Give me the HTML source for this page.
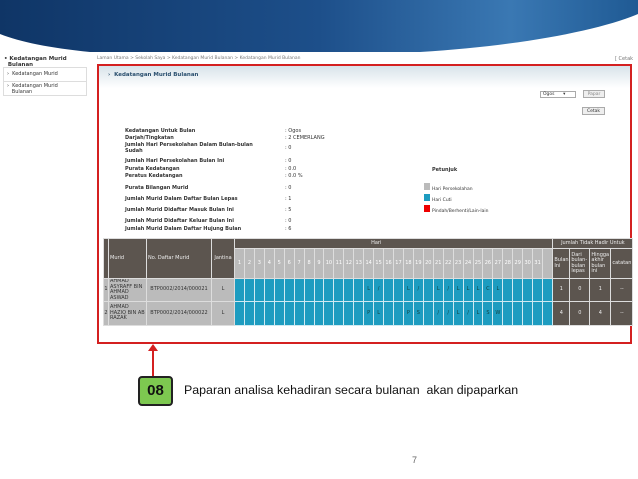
<!DOCTYPE html>
<html><head><meta charset="utf-8"><style>
*{margin:0;padding:0;box-sizing:border-box}
body{width:638px;height:479px;background:#fff;position:relative;overflow:hidden;font-family:"DejaVu Sans","Liberation Sans",sans-serif}
.a{position:absolute;white-space:nowrap}
.s{font-size:5px;color:#333}
.b{font-size:5px;font-weight:bold;color:#333}
table{border-collapse:collapse;position:absolute;left:103px;top:238px;width:529px;table-layout:fixed;font-size:5px}
td{border:1px solid #ddd;text-align:center;padding:0;overflow:hidden;line-height:5.5px}
.h{background:#5c554f;color:#eee}
.g{background:#bbb;color:#fff}
.c{background:#1d9cc0;color:#144;border-color:#cfeaf2}
.d{background:#bbb;color:#333}
.l{text-align:left;padding-left:1px}
</style></head><body>
<svg class="a" style="left:0;top:0" width="638" height="60">
<defs><linearGradient id="bg" x1="0" x2="1" y1="0" y2="0"><stop offset="0" stop-color="#0f3566"/><stop offset="0.5" stop-color="#1d4f8a"/><stop offset="0.8" stop-color="#3a78b3"/><stop offset="1" stop-color="#1f5a94"/></linearGradient></defs>
<path d="M0 0H638V14C600 30 520 46 420 52H90C50 48 20 42 0 34Z" fill="url(#bg)"/>
</svg>
<div class="a b" style="left:4px;top:56px;font-size:5.5px;line-height:6px">• Kedatangan Murid<br>&nbsp;&nbsp;Bulanan</div>
<div class="a" style="left:3px;top:67px;width:84px;height:29px;border:1px solid #ddd"></div>
<div class="a s" style="left:3px;top:81px;width:84px;border-top:1px solid #ddd"></div>
<div class="a s" style="left:7px;top:71px">› &nbsp;Kedatangan Murid</div>
<div class="a s" style="left:7px;top:83px;line-height:6px">› &nbsp;Kedatangan Murid<br>&nbsp;&nbsp;&nbsp;Bulanan</div>
<div class="a s" style="left:97px;top:56px;color:#777;font-size:4.5px">Laman Utama &gt; Sekolah Saya &gt; Kedatangan Murid Bulanan &gt; Kedatangan Murid Bulanan</div>
<div class="a s" style="left:615px;top:56px;color:#777">[ Cetak</div>
<div class="a" style="left:97px;top:64px;width:535px;height:280px;border:2px solid #d42020;background:linear-gradient(#d8e3ea,#fff 22px)"></div>
<div class="a b" style="left:108px;top:72px;color:#2a4f6e;font-size:5.5px">› &nbsp;Kedatangan Murid Bulanan</div>
<div class="a s" style="left:540px;top:91px;width:36px;height:7px;border:1px solid #aaa;font-size:4.5px;padding-left:2px">Ogos &nbsp;&nbsp;&nbsp;&nbsp;&nbsp;▾</div>
<div class="a s" style="left:583px;top:90px;width:22px;height:8px;border:1px solid #aaa;background:#eee;font-size:4.5px;text-align:center;line-height:7px;color:#888">Papar</div>
<div class="a s" style="left:582px;top:107px;width:23px;height:8px;border:1px solid #aaa;background:#eee;font-size:4.5px;text-align:center;line-height:7px">Cetak</div>
<div class="a b" style="left:125px;top:128px;line-height:7px">Kedatangan Untuk Bulan<br>Darjah/Tingkatan</div>
<div class="a b" style="left:125px;top:142px;line-height:6px">Jumlah Hari Persekolahan Dalam Bulan-bulan<br>Sudah</div>
<div class="a b" style="left:125px;top:158px;line-height:7.5px">Jumlah Hari Persekolahan Bulan Ini<br>Purata Kedatangan<br>Peratus Kedatangan</div>
<div class="a b" style="left:125px;top:185px">Purata Bilangan Murid</div>
<div class="a b" style="left:125px;top:196px">Jumlah Murid Dalam Daftar Bulan Lepas</div>
<div class="a b" style="left:125px;top:207px">Jumlah Murid Didaftar Masuk Bulan Ini</div>
<div class="a b" style="left:125px;top:217px;line-height:8px">Jumlah Murid Didaftar Keluar Bulan Ini<br>Jumlah Murid Dalam Daftar Hujung Bulan</div>
<div class="a s" style="left:285px;top:128px;line-height:7px">: Ogos<br>: 2 CEMERLANG</div>
<div class="a s" style="left:285px;top:145px">: 0</div>
<div class="a s" style="left:285px;top:158px;line-height:7.5px">: 0<br>: 0.0<br>: 0.0 %</div>
<div class="a s" style="left:285px;top:185px">: 0</div>
<div class="a s" style="left:285px;top:196px">: 1</div>
<div class="a s" style="left:285px;top:207px">: 5</div>
<div class="a s" style="left:285px;top:217px;line-height:8px">: 0<br>: 6</div>
<div class="a b" style="left:432px;top:167px">Petunjuk</div>
<div class="a" style="left:424px;top:183px;width:6px;height:7px;background:#bbb"></div>
<div class="a" style="left:424px;top:194px;width:6px;height:7px;background:#1d9cc0"></div>
<div class="a" style="left:424px;top:205px;width:6px;height:7px;background:#e00"></div>
<div class="a s" style="left:432px;top:184px;line-height:11px;font-size:4.5px">Hari Persekolahan<br>Hari Cuti<br>Pindah/Berhenti/Lain-lain</div>
<table>
<colgroup><col style="width:5px"><col style="width:38px"><col style="width:65px"><col style="width:23px"><col span="32" style="width:9.94px"><col style="width:17px"><col style="width:20px"><col style="width:21px"><col style="width:22px"></colgroup>
<tr style="height:10px"><td class="h" rowspan="2"></td><td class="h l" rowspan="2">Murid</td><td class="h l" rowspan="2">No. Daftar Murid</td><td class="h" rowspan="2">Jantina</td><td class="h l" colspan="32">&nbsp;&nbsp;&nbsp;&nbsp;&nbsp;&nbsp;&nbsp;&nbsp;&nbsp;&nbsp;&nbsp;&nbsp;&nbsp;&nbsp;&nbsp;&nbsp;&nbsp;&nbsp;&nbsp;&nbsp;&nbsp;&nbsp;&nbsp;&nbsp;&nbsp;&nbsp;&nbsp;&nbsp;&nbsp;&nbsp;&nbsp;&nbsp;&nbsp;&nbsp;&nbsp;&nbsp;&nbsp;&nbsp;&nbsp;&nbsp;&nbsp;&nbsp;&nbsp;&nbsp;&nbsp;&nbsp;&nbsp;&nbsp;&nbsp;&nbsp;&nbsp;&nbsp;&nbsp;&nbsp;&nbsp;&nbsp;&nbsp;&nbsp;&nbsp;&nbsp;&nbsp;&nbsp;&nbsp;&nbsp;&nbsp;&nbsp;&nbsp;&nbsp;&nbsp;&nbsp;&nbsp;&nbsp;&nbsp;&nbsp;&nbsp;&nbsp;&nbsp;&nbsp;&nbsp;&nbsp;&nbsp;&nbsp;&nbsp;&nbsp;&nbsp;Hari</td><td class="h" colspan="4">Jumlah Tidak Hadir Untuk</td></tr>
<tr style="height:30px"><td class="g">1</td><td class="g">2</td><td class="g">3</td><td class="g">4</td><td class="g">5</td><td class="g">6</td><td class="g">7</td><td class="g">8</td><td class="g">9</td><td class="g">10</td><td class="g">11</td><td class="g">12</td><td class="g">13</td><td class="g">14</td><td class="g">15</td><td class="g">16</td><td class="g">17</td><td class="g">18</td><td class="g">19</td><td class="g">20</td><td class="g">21</td><td class="g">22</td><td class="g">23</td><td class="g">24</td><td class="g">25</td><td class="g">26</td><td class="g">27</td><td class="g">28</td><td class="g">29</td><td class="g">30</td><td class="g">31</td><td class="g"></td><td class="h l">Bulan Ini</td><td class="h l">Dari bulan-bulan lepas</td><td class="h l">Hingga akhir bulan ini</td><td class="h">catatan</td></tr>
<tr style="height:23px"><td class="d">1</td><td class="d l">AHMAD ASYRAFF BIN AHMAD ASWAD</td><td class="d">BTP0002/2014/000021</td><td class="d">L</td><td class="c"></td><td class="c"></td><td class="c"></td><td class="c"></td><td class="c"></td><td class="c"></td><td class="c"></td><td class="c"></td><td class="c"></td><td class="c"></td><td class="c"></td><td class="c"></td><td class="c"></td><td class="c">L</td><td class="c">/</td><td class="c"></td><td class="c"></td><td class="c">L</td><td class="c">/</td><td class="c"></td><td class="c">L</td><td class="c">/</td><td class="c">L</td><td class="c">L</td><td class="c">L</td><td class="c">C</td><td class="c">L</td><td class="c"></td><td class="c"></td><td class="c"></td><td class="c"></td><td class="c"></td><td class="h">1</td><td class="h">0</td><td class="h">1</td><td class="h">--</td></tr>
<tr style="height:24px"><td class="d">2</td><td class="d l">AHMAD HAZIQ BIN AB RAZAK</td><td class="d">BTP0002/2014/000022</td><td class="d">L</td><td class="c"></td><td class="c"></td><td class="c"></td><td class="c"></td><td class="c"></td><td class="c"></td><td class="c"></td><td class="c"></td><td class="c"></td><td class="c"></td><td class="c"></td><td class="c"></td><td class="c"></td><td class="c">P</td><td class="c">L</td><td class="c"></td><td class="c"></td><td class="c">P</td><td class="c">S</td><td class="c"></td><td class="c">/</td><td class="c">/</td><td class="c">L</td><td class="c">/</td><td class="c">L</td><td class="c">S</td><td class="c">W</td><td class="c"></td><td class="c"></td><td class="c"></td><td class="c"></td><td class="c"></td><td class="h">4</td><td class="h">0</td><td class="h">4</td><td class="h">--</td></tr>
</table>
<div class="a" style="left:152px;top:349px;width:2px;height:27px;background:#d42020"></div>
<div class="a" style="left:148px;top:344px;width:0;height:0;border-left:5px solid transparent;border-right:5px solid transparent;border-bottom:7px solid #d42020"></div>
<div class="a" style="left:138px;top:376px;width:35px;height:30px;background:#7dc850;border:2px solid #222;border-radius:4px;font:bold 15px 'Liberation Sans',sans-serif;text-align:center;line-height:26px;color:#111">08</div>
<div class="a" style="left:184px;top:383px;font:12.4px 'Liberation Sans',sans-serif;color:#111">Paparan analisa kehadiran secara bulanan &nbsp;akan dipaparkan</div>
<div class="a" style="left:412px;top:455px;font:9px 'Liberation Sans',sans-serif;color:#666">7</div>
</body></html>
